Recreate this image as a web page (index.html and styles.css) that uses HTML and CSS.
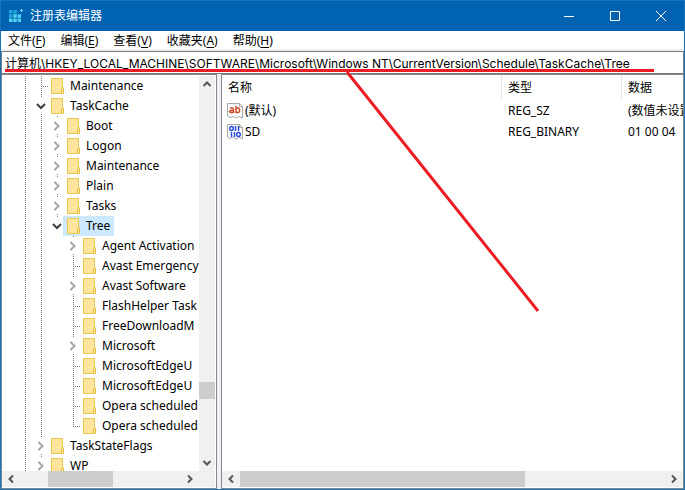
FILE: index.html
```html
<!DOCTYPE html>
<html lang="zh-CN">
<head>
    <meta charset="UTF-8">
    <meta name="viewport" content="width=device-width, initial-scale=1.0">
    <title>注册表编辑器</title>
    <link rel="stylesheet" href="styles.css">
</head>
<body>
    <svg class="defs" aria-hidden="true">
        <symbol id="folder" viewBox="0 0 13 16">
            <path d="M0.5 0.5H11.5V8.5L12.5 10V15.5H0.5Z" fill="#ffe69c" stroke="#ebc84f"/>
            <path d="M10.5 15V10.5L11.5 9.5L12.5 10.5V15" fill="#ffe69c" stroke="#e3bd40"/>
        </symbol>
        <symbol id="closed" viewBox="0 0 16 16">
            <path d="M5.5 4L9.5 8L5.5 12" fill="none" stroke="#a6a6a6" stroke-width="2"/>
        </symbol>
        <symbol id="open" viewBox="0 0 16 16">
            <path d="M4 6L8 10L12 6" fill="none" stroke="#404040" stroke-width="2"/>
        </symbol>
        <symbol id="arrow" viewBox="0 0 16 16">
            <path d="M6 4.5L9.5 8L6 11.5" fill="none" stroke="#555" stroke-width="2"/>
        </symbol>
    </svg>

    <div class="window">
        <header class="titlebar">
            <svg class="app-icon" width="16" height="16" viewBox="0 0 16 16" aria-hidden="true">
                <path d="M1 2H4.5V5.5H1ZM5.3 2H8.8V5.5H5.3ZM1 6.3H4.5V9.8H1Z" fill="#1fa5dc"/>
                <path d="M5.3 6.3H8.8V9.8H5.3ZM9.6 6.3H13V9.8H9.6ZM1 10.6H4.5V14H1ZM5.3 10.6H8.8V14H5.3ZM9.6 10.6H13V14H9.6Z" fill="#4fd0f2"/>
                <path d="M12 2H15V3H12ZM13 1H14V4H13Z" fill="#6fdcf8"/>
            </svg>
            <h1 class="title">注册表编辑器</h1>
            <div class="caption-buttons">
                <button class="caption-button" aria-label="最小化"><svg width="12" height="12"><path d="M1 6.5H11"/></svg></button>
                <button class="caption-button" aria-label="最大化"><svg width="12" height="12"><path d="M1.5 1.5H10.5V10.5H1.5Z"/></svg></button>
                <button class="caption-button" aria-label="关闭"><svg width="12" height="12"><path d="M1 1L11 11M11 1L1 11"/></svg></button>
            </div>
        </header>

        <nav class="menubar">
            <button class="menu">文件(<u>F</u>)</button>
            <button class="menu">编辑(<u>E</u>)</button>
            <button class="menu">查看(<u>V</u>)</button>
            <button class="menu">收藏夹(<u>A</u>)</button>
            <button class="menu">帮助(<u>H</u>)</button>
        </nav>

        <input class="address" type="text" aria-label="地址" value="计算机\HKEY_LOCAL_MACHINE\SOFTWARE\Microsoft\Windows NT\CurrentVersion\Schedule\TaskCache\Tree">

        <main class="panes">
            <section class="pane tree-pane">
                <div class="tree-view">
                    <ul class="tree">
                        <li class="row"><i class="cell line"></i><i class="cell line leaf"></i><span class="key"><svg class="folder"><use href="#folder"/></svg>Maintenance</span></li>
                        <li class="row"><i class="cell line"></i><i class="cell line"><svg class="twist"><use href="#open"/></svg></i><span class="key"><svg class="folder"><use href="#folder"/></svg>TaskCache</span></li>
                        <li class="row"><i class="cell line"></i><i class="cell line"></i><i class="cell line"><svg class="twist"><use href="#closed"/></svg></i><span class="key"><svg class="folder"><use href="#folder"/></svg>Boot</span></li>
                        <li class="row"><i class="cell line"></i><i class="cell line"></i><i class="cell line"><svg class="twist"><use href="#closed"/></svg></i><span class="key"><svg class="folder"><use href="#folder"/></svg>Logon</span></li>
                        <li class="row"><i class="cell line"></i><i class="cell line"></i><i class="cell line"><svg class="twist"><use href="#closed"/></svg></i><span class="key"><svg class="folder"><use href="#folder"/></svg>Maintenance</span></li>
                        <li class="row"><i class="cell line"></i><i class="cell line"></i><i class="cell line"><svg class="twist"><use href="#closed"/></svg></i><span class="key"><svg class="folder"><use href="#folder"/></svg>Plain</span></li>
                        <li class="row"><i class="cell line"></i><i class="cell line"></i><i class="cell line"><svg class="twist"><use href="#closed"/></svg></i><span class="key"><svg class="folder"><use href="#folder"/></svg>Tasks</span></li>
                        <li class="row"><i class="cell line"></i><i class="cell line"></i><i class="cell line last"><svg class="twist"><use href="#open"/></svg></i><span class="key selected"><svg class="folder"><use href="#folder"/></svg>Tree</span></li>
                        <li class="row"><i class="cell line"></i><i class="cell line"></i><i class="cell"></i><i class="cell line"><svg class="twist"><use href="#closed"/></svg></i><span class="key"><svg class="folder"><use href="#folder"/></svg>Agent Activation</span></li>
                        <li class="row"><i class="cell line"></i><i class="cell line"></i><i class="cell"></i><i class="cell line leaf"></i><span class="key"><svg class="folder"><use href="#folder"/></svg>Avast Emergency</span></li>
                        <li class="row"><i class="cell line"></i><i class="cell line"></i><i class="cell"></i><i class="cell line"><svg class="twist"><use href="#closed"/></svg></i><span class="key"><svg class="folder"><use href="#folder"/></svg>Avast Software</span></li>
                        <li class="row"><i class="cell line"></i><i class="cell line"></i><i class="cell"></i><i class="cell line leaf"></i><span class="key"><svg class="folder"><use href="#folder"/></svg>FlashHelper Task</span></li>
                        <li class="row"><i class="cell line"></i><i class="cell line"></i><i class="cell"></i><i class="cell line leaf"></i><span class="key"><svg class="folder"><use href="#folder"/></svg>FreeDownloadM</span></li>
                        <li class="row"><i class="cell line"></i><i class="cell line"></i><i class="cell"></i><i class="cell line"><svg class="twist"><use href="#closed"/></svg></i><span class="key"><svg class="folder"><use href="#folder"/></svg>Microsoft</span></li>
                        <li class="row"><i class="cell line"></i><i class="cell line"></i><i class="cell"></i><i class="cell line leaf"></i><span class="key"><svg class="folder"><use href="#folder"/></svg>MicrosoftEdgeU</span></li>
                        <li class="row"><i class="cell line"></i><i class="cell line"></i><i class="cell"></i><i class="cell line leaf"></i><span class="key"><svg class="folder"><use href="#folder"/></svg>MicrosoftEdgeU</span></li>
                        <li class="row"><i class="cell line"></i><i class="cell line"></i><i class="cell"></i><i class="cell line leaf"></i><span class="key"><svg class="folder"><use href="#folder"/></svg>Opera scheduled</span></li>
                        <li class="row"><i class="cell line"></i><i class="cell line"></i><i class="cell"></i><i class="cell line leaf last"></i><span class="key"><svg class="folder"><use href="#folder"/></svg>Opera scheduled</span></li>
                        <li class="row"><i class="cell line"></i><i class="cell line"><svg class="twist"><use href="#closed"/></svg></i><span class="key"><svg class="folder"><use href="#folder"/></svg>TaskStateFlags</span></li>
                        <li class="row"><i class="cell line"></i><i class="cell line"><svg class="twist"><use href="#closed"/></svg></i><span class="key"><svg class="folder"><use href="#folder"/></svg>WP</span></li>
                    </ul>
                    <div class="scroll vertical">
                        <svg class="arrow up"><use href="#arrow"/></svg>
                        <div class="track"><div class="thumb"></div></div>
                        <svg class="arrow down"><use href="#arrow"/></svg>
                    </div>
                </div>
                <div class="scroll horizontal tree-scroll">
                    <svg class="arrow left"><use href="#arrow"/></svg>
                    <div class="track"><div class="thumb"></div></div>
                    <svg class="arrow"><use href="#arrow"/></svg>
                </div>
            </section>

            <section class="pane values-pane">
                <div class="values-view">
                    <table class="values">
                        <thead>
                            <tr><th class="name">名称</th><th class="type">类型</th><th>数据</th></tr>
                        </thead>
                        <tbody>
                            <tr>
                                <td><span class="value-name"><svg class="value-icon" viewBox="0 0 16 16">
                                    <path d="M0.5 0.5H12.5L15.5 3.5V15L12 13.5L9 15L6 13.5L3 14.5L0.5 13Z" fill="#fff" stroke="#a8a8a8"/>
                                    <path d="M12.5 0.5V3.5H15.5" fill="none" stroke="#a8a8a8"/>
                                    <path d="M3 5H5.5L6.5 6V10M6 7.5H3.5L2.5 8.5L3.5 9.5H6M9 3V10M9 6L10 5H11.5L12.5 6V8.5L11.5 9.5H9" fill="none" stroke="#d04a2b" stroke-width="1.5"/>
                                </svg>(默认)</span></td>
                                <td>REG_SZ</td>
                                <td>(数值未设置)</td>
                            </tr>
                            <tr>
                                <td><span class="value-name"><svg class="value-icon" viewBox="0 0 16 16">
                                    <path d="M0.5 0.5H12.5L15.5 3.5V15L12 13.5L9 15L6 13.5L3 14.5L0.5 13Z" fill="#fff" stroke="#a8a8a8"/>
                                    <path d="M12.5 0.5V3.5H15.5" fill="none" stroke="#a8a8a8"/>
                                    <ellipse cx="4.5" cy="4.5" rx="1.8" ry="2" fill="none" stroke="#2349d8" stroke-width="1.4"/>
                                    <ellipse cx="11.5" cy="10.5" rx="1.8" ry="2" fill="none" stroke="#2349d8" stroke-width="1.4"/>
                                    <path d="M8.5 2V7M11.5 2V7M4.5 8V13M7.5 8V13" fill="none" stroke="#2349d8" stroke-width="1.5"/>
                                </svg>SD</span></td>
                                <td>REG_BINARY</td>
                                <td>01 00 04</td>
                            </tr>
                        </tbody>
                    </table>
                </div>
                <div class="scroll horizontal values-scroll">
                    <svg class="arrow left"><use href="#arrow"/></svg>
                    <div class="track"><div class="thumb"></div></div>
                    <svg class="arrow"><use href="#arrow"/></svg>
                </div>
            </section>
        </main>

        <!-- red pen marks over the window -->
        <svg class="marks" width="685" height="490" aria-hidden="true">
            <path d="M5 70.5H654M347 72L538 311"/>
        </svg>
    </div>
</body>
</html>
```

FILE: styles.css
```css
* {
    box-sizing: border-box;
}
body {
    margin: 0;
    font-family: "Noto Sans", "Noto Sans CJK SC", sans-serif;
    font-size: 12px;
    line-height: 20px;
    color: #000;
}
button, input {
    font: inherit;
    color: inherit;
}
.defs {
    display: none;
}
.window {
    position: relative;
    display: flex;
    flex-direction: column;
    height: 100vh;
    border: 1px solid #1a72b8;
    background: #f0f0f0;
    overflow: hidden;
}

/* title bar */
.titlebar {
    display: flex;
    align-items: center;
    height: 30px;
    flex-shrink: 0;
    padding-left: 7px;
    background: #0063b1;
    color: #fff;
}
.title {
    flex: 1;
    margin: 0 0 0 6px;
    font-size: 12px;
    font-weight: normal;
}
.caption-buttons {
    display: flex;
}
.caption-button {
    display: flex;
    align-items: center;
    justify-content: center;
    width: 46px;
    height: 30px;
    padding: 0;
    border: 0;
    background: none;
}
.caption-button svg {
    fill: none;
    stroke: #fff;
}

/* menu and address */
.menubar {
    display: flex;
    gap: 1px;
    height: 18px;
    flex-shrink: 0;
    margin-bottom: 2px;
    background: #fff;
}
.menu {
    padding: 0 7px;
    border: 0;
    background: none;
    line-height: 20px;
}
.menu u {
    text-underline-offset: 2px;
}
.address {
    width: 100%;
    height: 23px;
    flex-shrink: 0;
    padding: 0 3px;
    border: 1px solid #7a7a7a;
    background: #fff;
    font-family: Inter, "Noto Sans CJK SC", sans-serif;
    outline: 0;
}

/* panes */
.panes {
    display: flex;
    flex: 1;
    gap: 4px;
    min-height: 0;
}
.pane {
    display: flex;
    flex-direction: column;
    min-width: 0;
    padding-bottom: 1px;
    border: 1px solid #828790;
    background: #fff;
}
.tree-pane {
    width: 216px;
    flex-shrink: 0;
    padding-right: 1px;
}
.values-pane {
    flex: 1;
}
.tree-view {
    display: flex;
    flex: 1;
    min-height: 0;
    padding-top: 1px;
}
.tree {
    flex: 1;
    min-width: 0;
    margin: 0;
    padding: 0 0 0 15px;
    list-style: none;
    overflow: hidden;
}
.row {
    display: flex;
    height: 20px;
    white-space: nowrap;
}
.cell {
    width: 16px;
    height: 20px;
    flex-shrink: 0;
}
.line {
    background: repeating-linear-gradient(#777 0 1px, transparent 1px 2px) 8px 0 / 1px 20px no-repeat;
}
.leaf {
    background:
        repeating-linear-gradient(#777 0 1px, transparent 1px 2px) 8px 0 / 1px 20px no-repeat,
        repeating-linear-gradient(to right, #777 0 1px, transparent 1px 2px) 8px 10px / 8px 1px no-repeat;
}
.last {
    background-size: 1px 10px, 8px 1px;
}
.twist {
    display: block;
    width: 16px;
    height: 16px;
    margin: 2px 0;
    background: #fff;
}
.key {
    display: flex;
    align-items: center;
    gap: 6px;
    height: 20px;
    margin-left: -2px;
    padding: 0 4px;
}
.selected {
    background: #cce8ff;
}
.folder {
    width: 13px;
    height: 16px;
    flex-shrink: 0;
}

/* value list */
.values-view {
    flex: 1;
    min-height: 0;
    overflow: hidden;
}
.values {
    width: 100%;
    table-layout: fixed;
    border-spacing: 0;
}
.values th {
    height: 25px;
    padding: 0 6px;
    border-right: 1px solid #e5e5e5;
    font-weight: normal;
    text-align: left;
}
.values th:last-child {
    border-right: 0;
}
.values .name {
    width: 280px;
}
.values .type {
    width: 120px;
}
.values td {
    height: 21px;
    padding: 0 6px;
    overflow: hidden;
    white-space: nowrap;
}
.values td:last-child {
    padding-right: 0;
}
.value-name {
    display: flex;
    align-items: center;
    gap: 2px;
    margin-left: -1px;
}
.value-icon {
    width: 16px;
    height: 16px;
}

/* scroll bars */
.scroll {
    display: flex;
    flex-shrink: 0;
    background: #f0f0f0;
}
.vertical {
    flex-direction: column;
    width: 16px;
}
.horizontal {
    height: 16px;
}
.tree-scroll {
    padding-right: 16px;
}
.arrow {
    width: 18px;
    height: 16px;
    flex-shrink: 0;
}
.vertical .arrow {
    width: 16px;
}
.up {
    transform: rotate(-90deg);
}
.down {
    transform: rotate(90deg);
}
.left {
    transform: scaleX(-1);
}
.track {
    display: flex;
    flex: 1;
}
.thumb {
    background: #cdcdcd;
}
.vertical .track {
    flex-direction: column;
}
.vertical .thumb {
    height: 17px;
    margin-top: 290px;
}
.tree-scroll .thumb {
    width: 65px;
    margin-left: 28px;
}
.values-scroll .thumb {
    width: 67%;
}

.marks {
    position: absolute;
    top: -1px;
    left: -1px;
    pointer-events: none;
    fill: none;
    stroke: #ed1c24;
    stroke-width: 3;
}
```
